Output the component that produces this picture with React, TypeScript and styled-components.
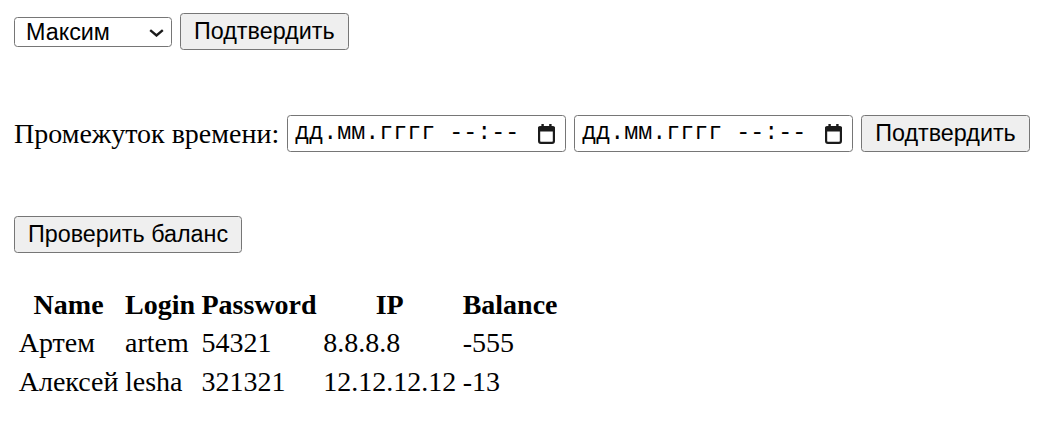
import React, { useState } from 'react';
import styled, { createGlobalStyle } from 'styled-components';

const GlobalStyle = createGlobalStyle`
  html, body {
    margin: 0;
    padding: 0;
    background: #ffffff;
  }
  body {
    font-family: "Liberation Serif", "Times New Roman", serif;
    font-size: 28px;
    line-height: 31px;
    color: #000000;
  }
`;

const Page = styled.div`
  display: flex;
  flex-direction: column;
  align-items: flex-start;
  padding: 13px 14px 0;
`;

interface RowProps {
  $offset?: number;
}

const Row = styled.div<RowProps>`
  display: flex;
  align-items: center;
  gap: 8px;
  height: 37px;
  margin-top: ${(props) => props.$offset ?? 0}px;
`;

const Button = styled.button`
  box-sizing: border-box;
  height: 37px;
  padding: 0 13px;
  border: 1px solid #767676;
  border-radius: 3.5px;
  background-color: #efefef;
  font-family: "Liberation Sans", Arial, sans-serif;
  font-size: 23.33px;
  line-height: 1;
  color: #000000;
  cursor: pointer;
  :active {
    background-color: #e5e5e5;
  }
`;

const SelectWrap = styled.div`
  position: relative;
  display: flex;
`;

const Select = styled.select`
  appearance: none;
  box-sizing: border-box;
  width: 158px;
  height: 30px;
  padding: 0 30px 0 11px;
  border: 1px solid #767676;
  border-radius: 3.5px;
  background-color: #ffffff;
  font-family: "Liberation Sans", Arial, sans-serif;
  font-size: 23.33px;
  color: #000000;
  outline: none;
`;

const Chevron = styled.svg`
  position: absolute;
  right: 8px;
  top: 12px;
  pointer-events: none;
`;

const Label = styled.span`
  white-space: nowrap;
`;

const DateField = styled.div`
  box-sizing: border-box;
  width: 279px;
  height: 37px;
  display: flex;
  align-items: center;
  justify-content: space-between;
  padding: 0 10px 0 7px;
  border: 1px solid #767676;
  border-radius: 3.5px;
  background-color: #ffffff;
  font-family: "Liberation Mono", "DejaVu Sans Mono", monospace;
  font-size: 23.33px;
  line-height: 1;
  white-space: pre;
  cursor: text;
`;

const CalendarIcon = styled.svg`
  flex: none;
  margin-top: 1px;
`;

const Table = styled.table`
  margin-top: 31px;
  border-collapse: separate;
  border-spacing: 3.5px;
  font-size: 28px;
  line-height: 32px;
`;

const Th = styled.th`
  padding: 1.75px;
  font-weight: bold;
  text-align: center;
`;

const Td = styled.td`
  padding: 1.75px;
  text-align: left;
  white-space: nowrap;
`;

interface User {
  name: string;
  login: string;
  password: string;
  ip: string;
  balance: number;
}

const users: User[] = [
  { name: 'Артем', login: 'artem', password: '54321', ip: '8.8.8.8', balance: -555 },
  { name: 'Алексей', login: 'lesha', password: '321321', ip: '12.12.12.12', balance: -13 },
];

const DateTimeInput: React.FC = () => (
  <DateField>
    <span>дд.мм.гггг --:--</span>
    <CalendarIcon width="17" height="20" viewBox="0 0 17 20">
      <rect x="3.4" y="0" width="2.4" height="4.5" fill="#1b1b1b" />
      <rect x="11.2" y="0" width="2.4" height="4.5" fill="#1b1b1b" />
      <rect
        x="1.1"
        y="3.2"
        width="14.8"
        height="15.7"
        rx="1.8"
        fill="none"
        stroke="#1b1b1b"
        strokeWidth="2.2"
      />
      <rect x="0" y="2.6" width="17" height="5" rx="1.2" fill="#1b1b1b" />
    </CalendarIcon>
  </DateField>
);

const App: React.FC = () => {
  const [person, setPerson] = useState('Максим');

  return (
    <>
      <GlobalStyle />
      <Page>
        <Row>
          <SelectWrap>
            <Select value={person} onChange={(e) => setPerson(e.target.value)}>
              <option>Максим</option>
              <option>Артем</option>
              <option>Алексей</option>
            </Select>
            <Chevron width="15" height="8" viewBox="0 0 15 8">
              <path d="M1.2 1.2 L7.5 6.5 L13.8 1.2" fill="none" stroke="#1b1b1b" strokeWidth="2.4" />
            </Chevron>
          </SelectWrap>
          <Button>Подтвердить</Button>
        </Row>

        <Row $offset={65}>
          <Label>Промежуток времени:</Label>
          <DateTimeInput />
          <DateTimeInput />
          <Button>Подтвердить</Button>
        </Row>

        <Row $offset={64}>
          <Button>Проверить баланс</Button>
        </Row>

        <Table>
          <thead>
            <tr>
              <Th>Name</Th>
              <Th>Login</Th>
              <Th>Password</Th>
              <Th>IP</Th>
              <Th>Balance</Th>
            </tr>
          </thead>
          <tbody>
            {users.map((u) => (
              <tr key={u.login}>
                <Td>{u.name}</Td>
                <Td>{u.login}</Td>
                <Td>{u.password}</Td>
                <Td>{u.ip}</Td>
                <Td>{u.balance}</Td>
              </tr>
            ))}
          </tbody>
        </Table>
      </Page>
    </>
  );
};

export default App;
